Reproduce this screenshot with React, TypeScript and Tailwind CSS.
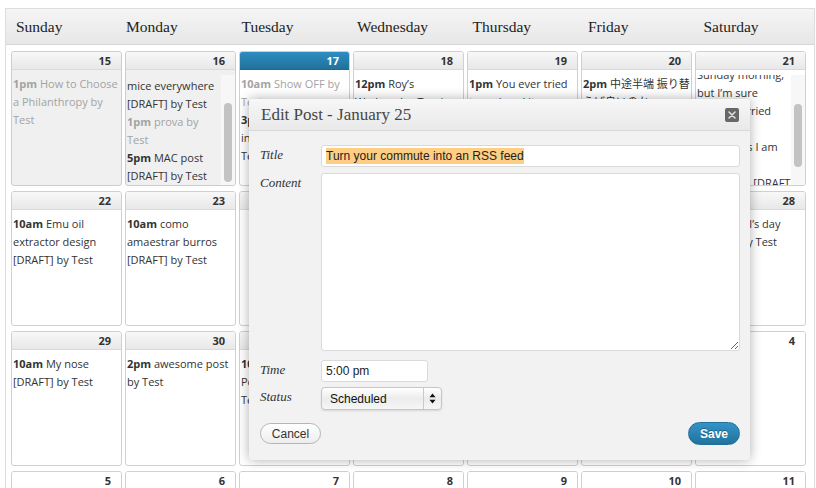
import React from 'react';

type Line = { b?: string; t?: string; gray?: boolean };
type Kind = 'past' | 'today' | 'normal' | 'next';
interface Day {
  n: number;
  kind: Kind;
  lines?: Line[];
  scroll?: { shift: string; thumb: string };
}

const days = ['Sunday', 'Monday', 'Tuesday', 'Wednesday', 'Thursday', 'Friday', 'Saturday'];
const dayWidths = ['w-[110px]', 'w-[115.5px]', 'w-[115.5px]', 'w-[115.5px]', 'w-[115.5px]', 'w-[115.5px]', 'w-[115.5px]'];

const draft: Line = { t: '[DRAFT] by Test' };

const weeks: Day[][] = [
  [
    { n: 15, kind: 'past', lines: [{ b: '1pm', t: ' How to Choose', gray: true }, { t: 'a Philanthropy by', gray: true }, { t: 'Test', gray: true }] },
    {
      n: 16,
      kind: 'past',
      scroll: { shift: 'mt-[-16px]', thumb: 'top-[28px] h-[79px]' },
      lines: [{ b: '10am', t: ' Mouse trap for' }, { t: 'mice everywhere' }, draft, { b: '1pm', t: ' prova by', gray: true }, { t: 'Test', gray: true }, { b: '5pm', t: ' MAC post' }, draft],
    },
    { n: 17, kind: 'today', lines: [{ b: '10am', t: ' Show OFF by', gray: true }, { t: 'Test', gray: true }, { b: '3pm', t: ' Something' }, { t: 'in the kitchen' }, { t: 'Test' }] },
    { n: 18, kind: 'normal', lines: [{ b: '12pm', t: ' Roy’s' }, { t: 'Wednesday Tossing' }, { t: 'by Test' }] },
    { n: 19, kind: 'normal', lines: [{ b: '1pm', t: ' You ever tried' }, { t: 'to make a kite' }, { t: 'by Test' }] },
    { n: 20, kind: 'normal', lines: [{ b: '2pm', t: ' 中途半端 振り替' }, { t: 'えば良いのか' }, { t: 'by Test' }] },
    {
      n: 21,
      kind: 'normal',
      scroll: { shift: 'mt-[-45px]', thumb: 'top-[29px] h-[63px]' },
      lines: [{ b: '10am', t: ' Pete’s' }, { t: 'birthday is on' }, { t: 'Sunday morning,' }, { t: 'but I’m sure' }, { t: 'you’re worried' }, { t: 'about' }, { t: 'anyway, as I am' }, { t: 'too.' }, { t: 'again, too. [DRAFT]' }, { t: 'by Test' }],
    },
  ],
  [
    { n: 22, kind: 'normal', lines: [{ b: '10am', t: ' Emu oil' }, { t: 'extractor design' }, draft] },
    { n: 23, kind: 'normal', lines: [{ b: '10am', t: ' como' }, { t: 'amaestrar burros' }, draft] },
    { n: 24, kind: 'normal' },
    { n: 25, kind: 'normal', lines: [{ b: '5pm', t: ' Turn your' }, { t: 'commute into an' }, { t: 'RSS feed by Test' }] },
    { n: 26, kind: 'normal' },
    { n: 27, kind: 'normal' },
    { n: 28, kind: 'normal', lines: [{ b: '10am', t: ' Paul’s day' }, draft] },
  ],
  [
    { n: 29, kind: 'normal', lines: [{ b: '10am', t: ' My nose' }, draft] },
    { n: 30, kind: 'normal', lines: [{ b: '2pm', t: ' awesome post' }, { t: 'by Test' }] },
    { n: 31, kind: 'normal', lines: [{ b: '10am', t: ' New' }, { t: 'Post by' }, { t: 'Test' }] },
    { n: 1, kind: 'next' },
    { n: 2, kind: 'next' },
    { n: 3, kind: 'next' },
    { n: 4, kind: 'next' },
  ],
  [5, 6, 7, 8, 9, 10, 11].map((n) => ({ n, kind: 'next' as Kind })),
];

function Lines({ lines }: { lines: Line[] }) {
  return (
    <>
      {lines.map((l, i) => (
        <div key={i} className={`whitespace-nowrap ${l.gray ? 'text-[#a3a3a3]' : 'text-[#333]'}`}>
          {l.b && <span className="font-bold">{l.b}</span>}
          {l.t}
        </div>
      ))}
    </>
  );
}

function Cell({ day }: { day: Day }) {
  const { n, kind, lines = [], scroll } = day;
  const head =
    kind === 'today'
      ? 'bg-linear-to-b from-[#2f8dc1] to-[#21729a] text-white border-b border-[#1d6a90]'
      : kind === 'next'
        ? 'bg-white text-[#333]'
        : 'bg-linear-to-b from-[#f8f8f8] to-[#e8e8e8] text-[#333] border-b border-[#dadada]';

  return (
    <div
      className={`h-[135px] border rounded-[3px] overflow-hidden flex flex-col ${
        kind === 'past' ? 'bg-[#f0f0f0] border-[#cdcdcd]' : 'bg-white border-[#d0d0d0]'
      }`}
    >
      <div className={`h-[18px] shrink-0 text-right pr-[10px] text-[11px] font-bold leading-[17px] ${head}`}>{n}</div>
      {scroll ? (
        <div className="relative mt-[5px] flex-1 overflow-hidden pl-[1px] leading-[18px]">
          <div className={`${scroll.shift} pr-[14px]`}>
            <Lines lines={lines} />
          </div>
          <div className="absolute right-0 top-0 bottom-0 w-[14px] bg-[#f7f7f7]">
            <div className={`absolute left-[3px] w-[8px] rounded-full bg-[#c3c3c3] ${scroll.thumb}`} />
          </div>
        </div>
      ) : (
        <div className="flex-1 overflow-hidden pt-[5px] pl-[1px] leading-[18px]">
          <Lines lines={lines} />
        </div>
      )}
    </div>
  );
}

function Field({ label, children }: { label: string; children: React.ReactNode }) {
  return (
    <div className="flex">
      <div className="w-[61px] shrink-0 pt-[1px] leading-[18px] text-[13px] italic text-[#333] font-['Liberation_Serif',serif]">{label}</div>
      {children}
    </div>
  );
}

function EditPost() {
  return (
    <div className="absolute left-[249px] top-[99px] w-[501px] h-[361px] rounded-[3px] bg-[#f2f2f2] shadow-[0_0_12px_rgba(0,0,0,0.32)] flex flex-col overflow-hidden">
      <div className="h-[32px] shrink-0 flex items-center justify-between pl-[12px] pr-[11px] bg-linear-to-b from-[#f7f7f7] to-[#e9e9e9] border-b border-[#d9d9d9]">
        <span className="text-[17px] text-[#464646] font-['Liberation_Serif',serif]">Edit Post - January 25</span>
        <button className="w-[14px] h-[14px] rounded-[2px] bg-[#676767] flex items-center justify-center">
          <svg width="8" height="8" viewBox="0 0 8 8">
            <path d="M1 1 L7 7 M7 1 L1 7" stroke="#dedede" strokeWidth="1.6" strokeLinecap="round" />
          </svg>
        </button>
      </div>

      <div className="flex-1 flex flex-col pl-[11px] pr-[10px] pt-[14px] pb-[15px] font-['Liberation_Sans',Arial,sans-serif] text-[12px] text-[#222]">
        <Field label="Title">
          <div className="flex-1 h-[22px] bg-white border border-[#dadada] rounded-[3px] pl-[4px] flex items-center">
            <span className="bg-[#fdce83] leading-[16px]">Turn your commute into an RSS feed</span>
          </div>
        </Field>
        <div className="h-[6px]" />
        <Field label="Content">
          <textarea className="flex-1 h-[178px] bg-white border border-[#dadada] rounded-[3px] outline-none" />
        </Field>
        <div className="h-[9px]" />
        <Field label="Time">
          <div className="w-[107px] h-[22px] bg-white border border-[#dadada] rounded-[3px] pl-[4px] flex items-center">5:00 pm</div>
        </Field>
        <div className="h-[5px]" />
        <Field label="Status">
          <div className="w-[121px] h-[23px] flex rounded-[4px] border border-[#c6c6c6] bg-linear-to-b from-[#ffffff] via-[#ececec] to-[#f6f6f6] shadow-[0_1px_2px_rgba(0,0,0,0.12)]">
            <div className="w-[102px] pl-[8px] flex items-center border-r border-[#c9c9c9] text-[12px] text-[#111]">Scheduled</div>
            <div className="flex-1 flex items-center justify-center">
              <svg width="7" height="11" viewBox="0 0 7 11">
                <path d="M3.5 0.5 L6.5 4.2 L0.5 4.2 Z M3.5 10.5 L6.5 6.8 L0.5 6.8 Z" fill="#111" />
              </svg>
            </div>
          </div>
        </Field>
        <div className="mt-auto flex items-center justify-between">
          <button className="w-[61px] h-[21px] rounded-full border border-[#b5b5b5] bg-linear-to-b from-[#ffffff] to-[#ededed] text-[12px] text-[#333] leading-none">
            Cancel
          </button>
          <button className="w-[52px] h-[23px] rounded-full bg-linear-to-b from-[#3593c8] to-[#21739b] border border-[#21709a] text-[12px] font-bold text-white leading-none [text-shadow:0_-1px_0_rgba(0,0,0,0.3)]">
            Save
          </button>
        </div>
      </div>
    </div>
  );
}

export default function App() {
  return (
    <div className="relative w-[816px] h-[488px] overflow-hidden bg-white font-['Open_Sans','Noto_Sans_CJK_JP',sans-serif] text-[11px] text-[#333]">
      <div className="mt-[8px] ml-[5px] w-[810px] border border-[#dddddd]">
        <div className="h-[36px] flex items-center pl-[10px] bg-linear-to-b from-[#f5f5f5] to-[#e7e7e7] border-b border-[#d6d6d6] font-['Liberation_Serif',serif] text-[15.5px] text-[#222]">
          {days.map((d, i) => (
            <div key={d} className={`${dayWidths[i]} shrink-0`}>
              {d}
            </div>
          ))}
        </div>
        <div className="grid grid-cols-[repeat(7,111px)] gap-x-[3px] gap-y-[5px] px-[5px] pt-[6px]">
          {weeks.flat().map((day, i) => (
            <Cell key={i} day={day} />
          ))}
        </div>
      </div>
      <EditPost />
    </div>
  );
}
